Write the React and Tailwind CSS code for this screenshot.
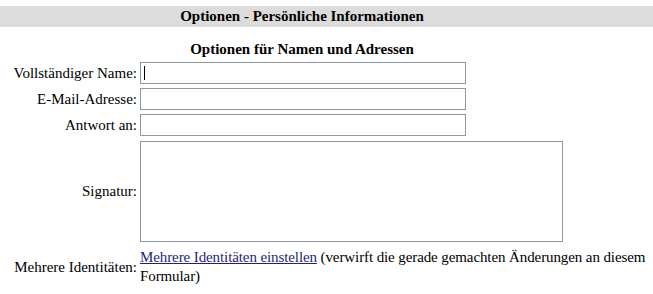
import React from "react";

const Row = ({ label, children, className = "" }) => (
  <div className={`flex items-center ${className}`}>
    <div className="w-[137px] shrink-0 text-right whitespace-nowrap">{label}</div>
    <div className="ml-[3px] shrink-0">{children}</div>
  </div>
);

const App = () => {
  return (
    <div className="w-[653px] h-[294px] overflow-hidden bg-white pt-[6px] font-['Liberation_Serif'] text-[15px] leading-[19px] text-black">
      {/* header bar */}
      <div className="bg-[#dcdcdc] h-[21px] leading-[21px]">
        <div className="w-[604px] text-center font-bold">
          Optionen - Persönliche Informationen
        </div>
      </div>

      <div className="w-[604px] mt-[12px] leading-[20px] text-center font-bold">
        Optionen für Namen und Adressen
      </div>

      <div className="mt-[3px] flex flex-col">
        <Row label="Vollständiger Name:">
          <div className="relative">
            <input
              type="text"
              className="block w-[326px] h-[22px] border border-[#8c99a3] bg-white px-[2px] outline-none"
            />
            <span className="absolute left-[4px] top-[4px] w-[1px] h-[14px] bg-black" />
          </div>
        </Row>
        <Row label="E-Mail-Adresse:" className="mt-[4px]">
          <input
            type="text"
            className="block w-[326px] h-[22px] border border-[#8c99a3] bg-white px-[2px] outline-none"
          />
        </Row>
        <Row label="Antwort an:" className="mt-[4px]">
          <input
            type="text"
            className="block w-[326px] h-[22px] border border-[#8c99a3] bg-white px-[2px] outline-none"
          />
        </Row>
        <Row label="Signatur:" className="mt-[5px]">
          <textarea className="block w-[423px] h-[101px] border border-[#8c99a3] bg-white resize-none outline-none" />
        </Row>
        <Row label="Mehrere Identitäten:" className="mt-[6px]">
          <div className="w-[520px] tracking-[-0.1px]">
            <a href="#" className="text-[#1f1f80] underline">
              Mehrere Identitäten einstellen
            </a>{" "}
            (verwirft die gerade gemachten Änderungen an diesem Formular)
          </div>
        </Row>
      </div>
    </div>
  );
};

export default App;
